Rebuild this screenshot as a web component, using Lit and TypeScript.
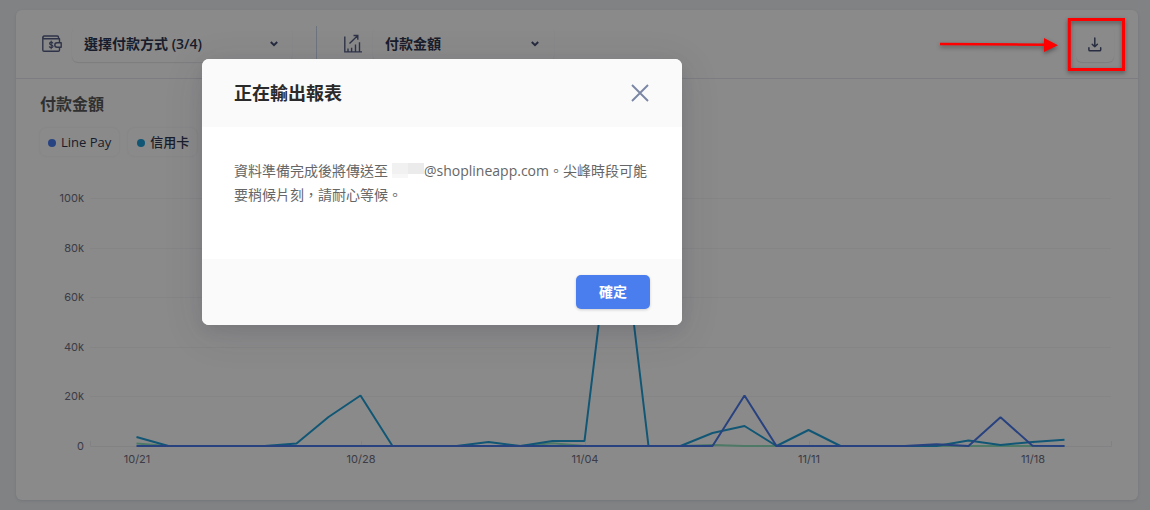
import { LitElement, html, css, svg } from "lit";
import { customElement } from "lit/decorators.js";

const STEP = 32;
const BASE = 446;
const points = (v: number[]) => v.map((y, i) => `${136.5 + i * STEP},${BASE - y}`).join(" ");

const card = [9, 0, 0, 0, 0, 2.5, 29, 50.5, 0, 0, 0, 4, 0, 5, 5, 268, 0, 0, 13, 20, 0, 16, 0, 0, 0, 0, 5.5, 1, 4, 6.2];
const line = [0, 0, 0, 0, 0, 0, 0, 0, 0, 0, 0, 0, 0, 0, 0, 0, 0, 0, 0, 50.5, 0, 0, 0, 0, 0, 1.8, 0, 28.8, 0.3, 0];
const other = [2.5, 0, 0, 0, 0, 0, 0, 0, 0, 0, 0, 0, 0, 2.8, 0, 0, 0, 0, 1, 0, 0, 0, 0, 0, 0, 0, 0, 0, 0, 0];

@customElement("payment-chart")
export class PaymentChart extends LitElement {
  static styles = css`
    :host { display: block; margin-top: 14px; }
    svg { display: block; }
    .grid { stroke: #f5f6f8; stroke-width: 1; fill: none; }
    .axis { stroke: #f0f1f4; stroke-width: 1; fill: none; }
    text { font: 11px Inter, sans-serif; fill: #6e7083; }
    .series { fill: none; stroke-width: 2; stroke-linejoin: bevel; }
    .other { stroke: #8fdfbc; }
    .card { stroke: #20a0d8; }
    .line { stroke: #4a78ea; }
  `;
  render() {
    return html`<svg width="1122" height="320" viewBox="16 170 1122 320">
      ${[198.5, 248.5, 297.5, 347.5, 396.5].map((y) => svg`<path class="grid" d="M90 ${y}H1111"/>`)}
      <path class="axis" d="M90.5 441V446.5H1111.5V441M361.5 441v5M585.5 441v5M809.5 441v5M1033.5 441v5"/>
      ${["100k", "80k", "60k", "40k", "20k", "0"].map((t, i) => svg`<text x="84" y=${202 + i * 49.6} text-anchor="end">${t}</text>`)}
      ${["10/21", "10/28", "11/04", "11/11", "11/18"].map((t, i) => svg`<text x=${137 + i * 224} y="463" text-anchor="middle">${t}</text>`)}
      <polyline class="series other" points=${points(other)}></polyline>
      <polyline class="series card" points=${points(card)}></polyline>
      <polyline class="series line" points=${points(line)}></polyline>
    </svg>`;
  }
}

@customElement("app-root")
export class AppRoot extends LitElement {
  static styles = css`
    :host { display: block; font-family: "Open Sans", "Noto Sans CJK TC", sans-serif; }
    * { box-sizing: border-box; }
    .page { position: relative; width: 1150px; height: 510px; overflow: hidden; background: #edf0f4; padding: 10px 12px 10px 16px; }
    .card { height: 490px; background: #fff; border-radius: 6px; box-shadow: 0 1px 3px rgba(40, 60, 90, 0.12); }
    .bar { height: 69px; border-bottom: 1px solid #e3e7f0; display: flex; align-items: center; padding: 0 24px 0 26px; }
    .icon { display: block; flex: none; }
    .select { height: 36px; display: flex; align-items: center; justify-content: space-between; border-radius: 6px; box-shadow: 0 1px 1px rgba(40, 50, 80, 0.12); font-size: 14px; font-weight: 600; color: #2f3650; padding: 0 14px 0 12px; }
    .select span { padding-bottom: 2px; }
    .first { width: 220px; margin-left: 10px; }
    .second { width: 181px; margin-left: 10px; padding-right: 15px; }
    .sep { width: 1px; height: 36px; background: #cbd6ea; margin: 0 26px 0 24px; }
    .download { margin-left: auto; width: 38px; height: 36px; border-radius: 6px; box-shadow: 0 1px 1px rgba(40, 50, 80, 0.12); display: grid; place-items: center; }
    .title { margin: 12px 0 0 24px; font-size: 16px; line-height: 26px; font-weight: 600; color: #5a5a5a; }
    .legend { display: flex; gap: 9px; margin: 11px 0 0 24px; height: 28px; }
    .chip { height: 28px; display: flex; align-items: center; gap: 5px; padding: 0 8px; border-radius: 6px; box-shadow: 0 0 2px rgba(40, 50, 80, 0.1); font-size: 13px; color: #2f3650; white-space: nowrap; }
    .chip.cjk { font-weight: 500; padding-left: 9px; }
    .chip.cjk span { padding-bottom: 1px; }
    .dot { width: 8px; height: 8px; margin-top: 1px; border-radius: 50%; background: #4a7df0; }
    .cyan { background: #20a0d8; }
    .shade { position: absolute; inset: 0; background: rgba(0, 0, 0, 0.46); }
    .modal { position: absolute; left: 202px; top: 59px; width: 480px; height: 266px; border-radius: 7px; overflow: hidden; background: #fff; display: flex; flex-direction: column; }
    .glow { position: absolute; left: 202px; top: 59px; width: 480px; height: 266px; border-radius: 7px; box-shadow: 0 8px 40px rgba(50, 50, 93, 0.12), 0 5px 15px rgba(0, 0, 0, 0.08); }
    .head { height: 68px; flex: none; background: #fafafa; display: flex; align-items: center; justify-content: space-between; padding: 0 32px; font-size: 18px; font-weight: 600; color: #2a2a2a; }
    .head span { padding-bottom: 2px; }
    .body { flex: 1; padding: 32px 32px 0; font-size: 14px; line-height: 24px; color: #666; }
    .row { white-space: nowrap; height: 24px; }
    .mask { display: inline-block; width: 32px; height: 15px; margin-left: 4px; vertical-align: -2px; background: linear-gradient(#ebebeb, #ebebeb) 16px 0 / 16px 11px no-repeat, linear-gradient(#f1f1f1 73%, #f7f7f7 73%) 0 0 / 16px 15px no-repeat; }
    .foot { height: 66px; flex: none; background: #fafafa; display: flex; justify-content: flex-end; align-items: center; padding: 0 32px; }
    .ok { width: 74px; height: 34px; border: 0; border-radius: 5px; background: #4a7eee; color: #fff; font: 700 14px "Open Sans", "Noto Sans CJK TC", sans-serif; padding: 0 0 2px; box-shadow: 0 1px 3px rgba(0, 0, 0, 0.18); }
    .note { position: absolute; left: 0; top: 0; filter: drop-shadow(0 2px 2px rgba(0, 0, 0, 0.4)); }
  `;
  chevron() {
    return html`<svg class="icon" width="8" height="6" viewBox="0 0 8 6" fill="none" stroke="#454f72" stroke-width="2"><path d="M.8 1 4 4.2 7.2 1"/></svg>`;
  }
  render() {
    return html`<div class="page">
      <div class="card">
        <div class="bar">
          <svg class="icon" width="20" height="18" viewBox="0 0 20 18" fill="none" stroke="#565f85" stroke-width="1.4" stroke-linejoin="round" stroke-linecap="round">
            <path d="M17.5 5V3.7H2A1.4 1.4 0 0 1 2 1h13.3q1.2 0 1.2 1.2v1.5M.8 2v13q0 1.3 1.3 1.3h14.2q1.2 0 1.2-1.3v-2.5M17.5 5v2.7M15 7.8h4.2v4.4H15a2.2 2.2 0 0 1 0-4.4z"/>
            <path stroke-width="1.2" d="M10.8 8q-.5-.8-1.6-.8-1.6 0-1.6 1.2t1.6 1.5q1.8.3 1.8 1.6 0 1.2-1.8 1.2-1.3 0-1.8-.9M9.2 6.2v7.5"/>
          </svg>
          <div class="select first"><span>選擇付款方式 (3/4)</span>${this.chevron()}</div>
          <div class="sep"></div>
          <svg class="icon" width="20" height="20" viewBox="0 0 20 20" fill="none" stroke="#565f85" stroke-width="1.4"><path d="M1.8 2.5v15.4H19M5 17.5v-3M8.6 17.5v-3.7M12.5 17.5v-7M16.5 17.5V8.2M6.5 9.5 14.5 1.8M10.5 1.5h4.3v4.3"/></svg>
          <div class="select second"><span>付款金額</span>${this.chevron()}</div>
          <div class="download"><svg class="icon" width="14" height="15" viewBox="0 0 14 15" fill="none" stroke="#4b5478" stroke-width="1.5" stroke-linecap="round" stroke-linejoin="round"><path d="M6.8 1v8.7M4.2 7.2 6.8 9.8l2.6-2.6M.9 10.7v2q0 1.1 1.1 1.1h9.6q1.1 0 1.1-1.1v-2"/></svg></div>
        </div>
        <div class="title">付款金額</div>
        <div class="legend">
          <div class="chip"><i class="dot"></i>Line Pay</div>
          <div class="chip cjk"><i class="dot cyan"></i><span>信用卡</span></div>
        </div>
        <payment-chart></payment-chart>
      </div>
      <div class="shade"></div>
      <div class="glow"></div>
      <div class="modal">
        <div class="head"><span>正在輸出報表</span><svg class="icon" width="20" height="20" viewBox="0 0 20 20" stroke="#7a86a3" stroke-width="1.9"><path d="M2 2 18 18M18 2 2 18"/></svg></div>
        <div class="body"><div class="row">資料準備完成後將傳送至<span class="mask"></span>@shoplineapp.com。尖峰時段可能</div><div class="row">要稍候片刻，請耐心等候。</div></div>
        <div class="foot"><button class="ok">確定</button></div>
      </div>
      <svg class="note" width="1150" height="90" viewBox="0 0 1150 90"><path d="M940 44 1046 44.7" stroke="#f00" stroke-width="2.6" fill="none"/><path d="M1044 38 1058 45.3 1044 52z" fill="#f00"/><rect x="1069.3" y="19.5" width="54.2" height="50" fill="none" stroke="#f00" stroke-width="3"/></svg>
    </div>`;
  }
}
